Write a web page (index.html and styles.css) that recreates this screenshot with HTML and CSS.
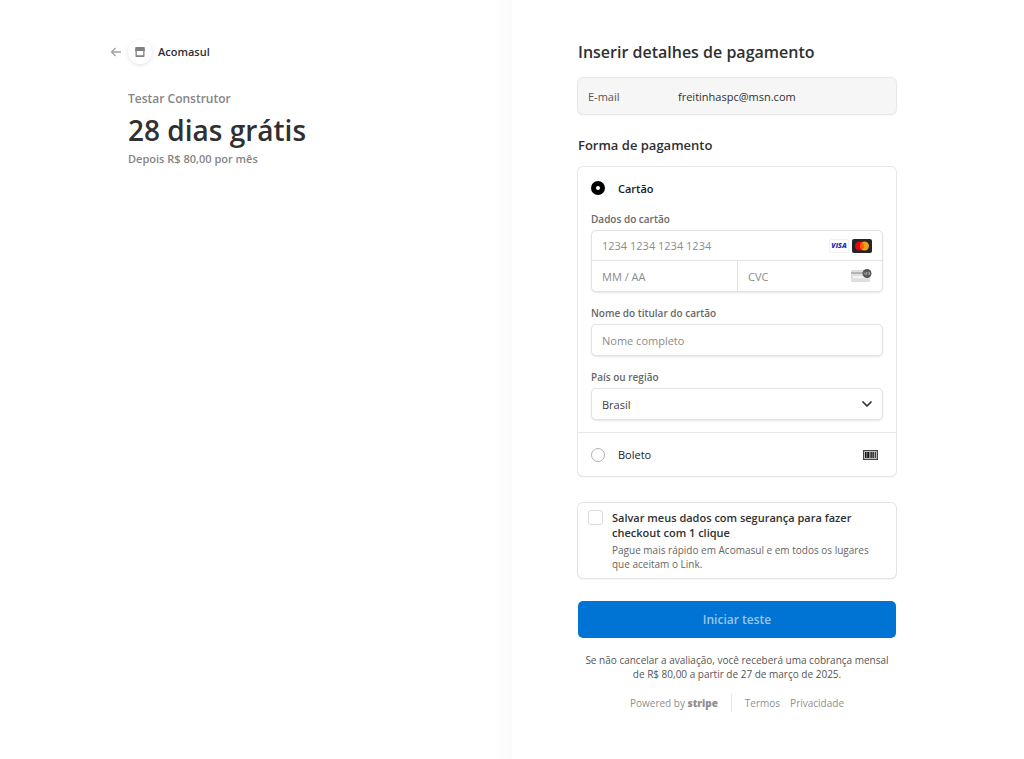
FILE: index.html
```html
<!DOCTYPE html>
<html lang="pt-BR">
<head>
    <meta charset="UTF-8">
    <meta name="viewport" content="width=device-width, initial-scale=1.0">
    <title>Acomasul</title>
    <link rel="stylesheet" href="styles.css">
</head>
<body>
    <div class="checkout">
        <!-- Order summary -->
        <section class="summary">
            <div class="summary-content">
                <header class="business">
                    <a href="#" class="back-link" aria-label="Voltar">
                        <svg width="12" height="12" viewBox="0 0 12 12" fill="none" stroke="#a0a0a0" stroke-width="1.3">
                            <path d="M11 6H1.5M5.5 2L1.5 6l4 4"/>
                        </svg>
                    </a>
                    <span class="business-icon">
                        <svg width="12" height="12" viewBox="0 0 12 12" fill="#808080">
                            <path d="M1.500 1h9l.5 2.800c0 .8-.2 1.300-.5 1.400V10c0 .6-.4 1-1 1h-7c-.6 0-1-.4-1-1V5.200c-.3-.1-.5-.6-.5-1.400zM2.800 5V9.200h6.400V5z" fill-rule="evenodd"/>
                        </svg>
                    </span>
                    <span class="business-name">Acomasul</span>
                </header>
                <p class="product-name">Testar Construtor</p>
                <h1 class="product-price">28 dias grátis</h1>
                <p class="product-note">Depois R$ 80,00 por mês</p>
            </div>
        </section>

        <!-- Payment form -->
        <main class="payment">
            <form class="payment-form">
                <h2 class="payment-title">Inserir detalhes de pagamento</h2>
                <div class="email-box">
                    <span class="email-label">E-mail</span>
                    <span class="email-value">freitinhaspc@msn.com</span>
                </div>

                <h3 class="section-title">Forma de pagamento</h3>
                <div class="methods">
                    <div class="method-card">
                        <label class="method-option">
                            <input type="radio" class="radio" name="method" value="card" checked>
                            <span class="method-name method-name-active">Cartão</span>
                        </label>

                        <label class="field-label" for="card-number">Dados do cartão</label>
                        <div class="card-fields">
                            <div class="card-cell card-cell-number">
                                <input type="text" class="card-input" id="card-number" placeholder="1234 1234 1234 1234">
                                <span class="brands">
                                    <span class="visa">VISA</span>
                                    <svg width="20" height="14" viewBox="0 0 20 14">
                                        <rect width="20" height="14" rx="2" fill="#252525"/>
                                        <circle cx="7.500" cy="7" r="4.500" fill="#eb001b"/>
                                        <circle cx="12.500" cy="7" r="4.500" fill="#f79e1b"/>
                                        <path d="M10 3.260a4.500 4.500 0 0 1 0 7.480a4.500 4.500 0 0 1 0-7.480z" fill="#ff5f00"/>
                                    </svg>
                                </span>
                            </div>
                            <div class="card-cell">
                                <input type="text" class="card-input" id="card-expiry" placeholder="MM / AA" aria-label="Validade">
                            </div>
                            <div class="card-cell card-cell-cvc">
                                <input type="text" class="card-input" id="card-cvc" placeholder="CVC" aria-label="CVC">
                                <svg width="21" height="14" viewBox="0 0 21 14">
                                    <rect x="0" y="1" width="19" height="12" rx="1.500" fill="#dedede"/>
                                    <rect x="0" y="3" width="19" height="2" fill="#b4b4b4"/>
                                    <rect x="2" y="7" width="13" height="2.500" fill="#f2f2f2"/>
                                    <circle cx="16" cy="4.500" r="4.500" fill="#555"/>
                                    <path d="M13.300 3.500v2M14.800 3.300h1.200v1.200h-1.200v1.200h1.300M17.300 3.300h1.200v2.400h-1.200M17.500 4.500h1" fill="none" stroke="#ccc" stroke-width=".6"/>
                                </svg>
                            </div>
                        </div>

                        <label class="field-label" for="card-name">Nome do titular do cartão</label>
                        <input type="text" class="text-input" id="card-name" placeholder="Nome completo">

                        <label class="field-label" for="country">País ou região</label>
                        <div class="select-wrap">
                            <select class="text-input select" id="country">
                                <option>Brasil</option>
                            </select>
                            <svg class="select-arrow" width="10" height="6" viewBox="0 0 10 6" fill="none" stroke="#303030" stroke-width="1.700" stroke-linecap="round" stroke-linejoin="round">
                                <path d="M1 1l4 4 4-4"/>
                            </svg>
                        </div>
                    </div>

                    <div class="method-boleto">
                        <label class="method-option">
                            <input type="radio" class="radio" name="method" value="boleto">
                            <span class="method-name">Boleto</span>
                        </label>
                        <svg width="15" height="10" viewBox="0 0 15 10">
                            <rect x=".6" y=".6" width="13.800" height="8.800" fill="#e4e4e4" stroke="#444" stroke-width="1.200"/>
                            <path d="M2 2h1.600v6H2zM4.200 2h1.800v6H4.200zM6.600 2h1v6h-1zM8.200 2h1.400v6H8.200zM10.200 2h.9v6h-.9zM11.800 2h1v6h-1z" fill="#111"/>
                        </svg>
                    </div>
                </div>

                <div class="save-box">
                    <input type="checkbox" class="checkbox" id="save-info">
                    <label class="save-text" for="save-info">
                        <span class="save-title">Salvar meus dados com segurança para fazer checkout com 1 clique</span>
                        <span class="save-description">Pague mais rápido em Acomasul e em todos os lugares que aceitam o Link.</span>
                    </label>
                </div>

                <button type="submit" class="submit-button">Iniciar teste</button>
                <p class="terms">Se não cancelar a avaliação, você receberá uma cobrança mensal de R$ 80,00 a partir de 27 de março de 2025.</p>
            </form>

            <footer class="footer">
                <a href="#" class="powered">Powered by <strong class="stripe">stripe</strong></a>
                <div class="footer-links">
                    <a href="#">Termos</a>
                    <a href="#">Privacidade</a>
                </div>
            </footer>
        </main>
    </div>
</body>
</html>
```

FILE: styles.css
```css
* {
    box-sizing: border-box;
    margin: 0;
    padding: 0;
    font-family: 'Open Sans', 'Noto Sans', sans-serif;
}

body {
    background-color: #ffffff;
    color: #303030;
    font-size: 11px;
}

a {
    color: inherit;
    text-decoration: none;
}

svg {
    display: block;
    flex-shrink: 0;
}

.checkout {
    display: grid;
    grid-template-columns: 1fr 1fr;
    min-height: 100vh;
}

/* Order summary */
.summary {
    display: flex;
    justify-content: flex-end;
    padding: 40px 66px;
    background: linear-gradient(to left, #fafafa, #ffffff 20px);
}

.summary-content {
    width: 100%;
    max-width: 318px;
}

.business {
    display: flex;
    align-items: center;
    height: 24px;
    margin-left: -18px;
    margin-bottom: 27px;
}

.business-icon {
    display: flex;
    align-items: center;
    justify-content: center;
    width: 24px;
    height: 24px;
    margin: 0 6px;
    border-radius: 50%;
    background-color: #ffffff;
    box-shadow: 0 1px 4px rgba(0, 0, 0, 0.12);
}

.business-name {
    font-size: 11px;
    font-weight: 600;
    line-height: 14px;
}

.product-name {
    font-size: 12px;
    font-weight: 600;
    line-height: 16px;
    color: #858585;
}

.product-price {
    font-size: 28px;
    font-weight: 600;
    line-height: 46px;
}

.product-note {
    font-size: 11px;
    font-weight: 600;
    line-height: 12px;
    color: #858585;
}

/* Payment form */
.payment {
    padding: 40px 66px;
    background-color: #ffffff;
}

.payment-form,
.footer {
    width: 100%;
    max-width: 318px;
}

.payment-title {
    font-size: 16px;
    font-weight: 600;
    line-height: 24px;
    margin-bottom: 14px;
}

.email-box {
    display: flex;
    align-items: center;
    height: 36px;
    padding: 0 10px;
    margin-bottom: 21px;
    border-radius: 5px;
    background-color: #f6f6f6;
    box-shadow: 0 0 0 1px #e8e8e8, 0 1px 2px rgba(0, 0, 0, 0.1);
}

.email-label {
    width: 90px;
    color: #555555;
}

.section-title {
    font-size: 13px;
    font-weight: 600;
    line-height: 20px;
    margin-bottom: 12px;
}

.methods {
    margin-bottom: 27px;
    border-radius: 5px;
    box-shadow: 0 0 0 1px #e8e8e8, 0 1px 2px rgba(0, 0, 0, 0.12);
}

.method-card {
    padding: 11px 13px 12px;
    border-bottom: 1px solid #e6e6e6;
}

.method-option {
    display: flex;
    align-items: center;
    gap: 13px;
    height: 20px;
}

.radio {
    appearance: none;
    width: 14px;
    height: 14px;
    border: 1px solid #b0b0b0;
    border-radius: 50%;
    background-color: #ffffff;
}

.radio:checked {
    border: 5px solid #000000;
}

.method-name {
    font-size: 11px;
    color: #1a1a1a;
}

.method-name-active {
    font-weight: 600;
}

.field-label {
    display: block;
    margin-top: 14px;
    font-size: 10px;
    font-weight: 600;
    line-height: 15px;
    padding-bottom: 3px;
    color: #686868;
}

.card-fields,
.text-input {
    width: 100%;
    border: 1px solid #e3e3e3;
    border-radius: 5px;
    background-color: #ffffff;
    box-shadow: 0 1px 2px rgba(0, 0, 0, 0.1);
}

.card-fields {
    display: grid;
    grid-template-columns: minmax(0, 1fr) minmax(0, 1fr);
}

.card-cell {
    display: flex;
    align-items: center;
    height: 30px;
    padding: 0 10px;
}

.card-cell-number {
    grid-column: 1 / -1;
    border-bottom: 1px solid #e3e3e3;
}

.card-cell-cvc {
    border-left: 1px solid #e3e3e3;
}

.card-input {
    flex: 1;
    min-width: 0;
    border: none;
    outline: none;
    background: none;
    font-size: 11px;
}

.card-input::placeholder,
.text-input::placeholder {
    color: #8c8c8c;
}

.brands {
    display: flex;
    gap: 3px;
}

.visa {
    width: 20px;
    height: 14px;
    border: 1px solid #f2f2f2;
    border-radius: 2px;
    font-size: 7px;
    font-style: italic;
    font-weight: 800;
    line-height: 12px;
    text-align: center;
    color: #1a2fb8;
}

.text-input {
    display: block;
    height: 32px;
    padding: 0 10px;
    font-size: 11px;
}

.select-wrap {
    position: relative;
}

.select {
    appearance: none;
    color: #404040;
}

.select-arrow {
    position: absolute;
    top: 13px;
    right: 11px;
    pointer-events: none;
}

.method-boleto {
    display: flex;
    align-items: center;
    justify-content: space-between;
    height: 43px;
    padding: 0 18px 0 13px;
}

/* Save with Link */
.save-box {
    display: flex;
    gap: 9px;
    padding: 7px 10px;
    margin-bottom: 23px;
    border-radius: 5px;
    box-shadow: 0 0 0 1px #e4e4e4, 0 1px 2px rgba(0, 0, 0, 0.12);
}

.checkbox {
    appearance: none;
    flex-shrink: 0;
    width: 15px;
    height: 15px;
    border: 1px solid #dcdcdc;
    border-radius: 3px;
    background-color: #ffffff;
}

.save-title,
.save-description {
    display: block;
}

.save-title {
    font-size: 11px;
    font-weight: 600;
    line-height: 15px;
    margin-bottom: 3px;
}

.save-description {
    font-size: 10px;
    line-height: 14px;
    color: #666666;
}

.submit-button {
    display: block;
    width: 100%;
    height: 37px;
    margin-bottom: 15px;
    border: none;
    border-radius: 5px;
    background-color: #0074d4;
    font-size: 12px;
    font-weight: 600;
    color: #99c7ee;
    cursor: pointer;
}

.terms {
    padding: 0 4px;
    font-size: 10px;
    line-height: 14px;
    text-align: center;
    color: #555555;
}

/* Footer */
.footer {
    display: flex;
    justify-content: center;
    margin-top: 13px;
    font-size: 10px;
    line-height: 18px;
    color: #909090;
}

.powered {
    padding-right: 13px;
    border-right: 1px solid #e6e6e6;
}

.stripe {
    font-weight: 800;
}

.footer-links {
    display: flex;
    gap: 10px;
    padding-left: 13px;
}
```
